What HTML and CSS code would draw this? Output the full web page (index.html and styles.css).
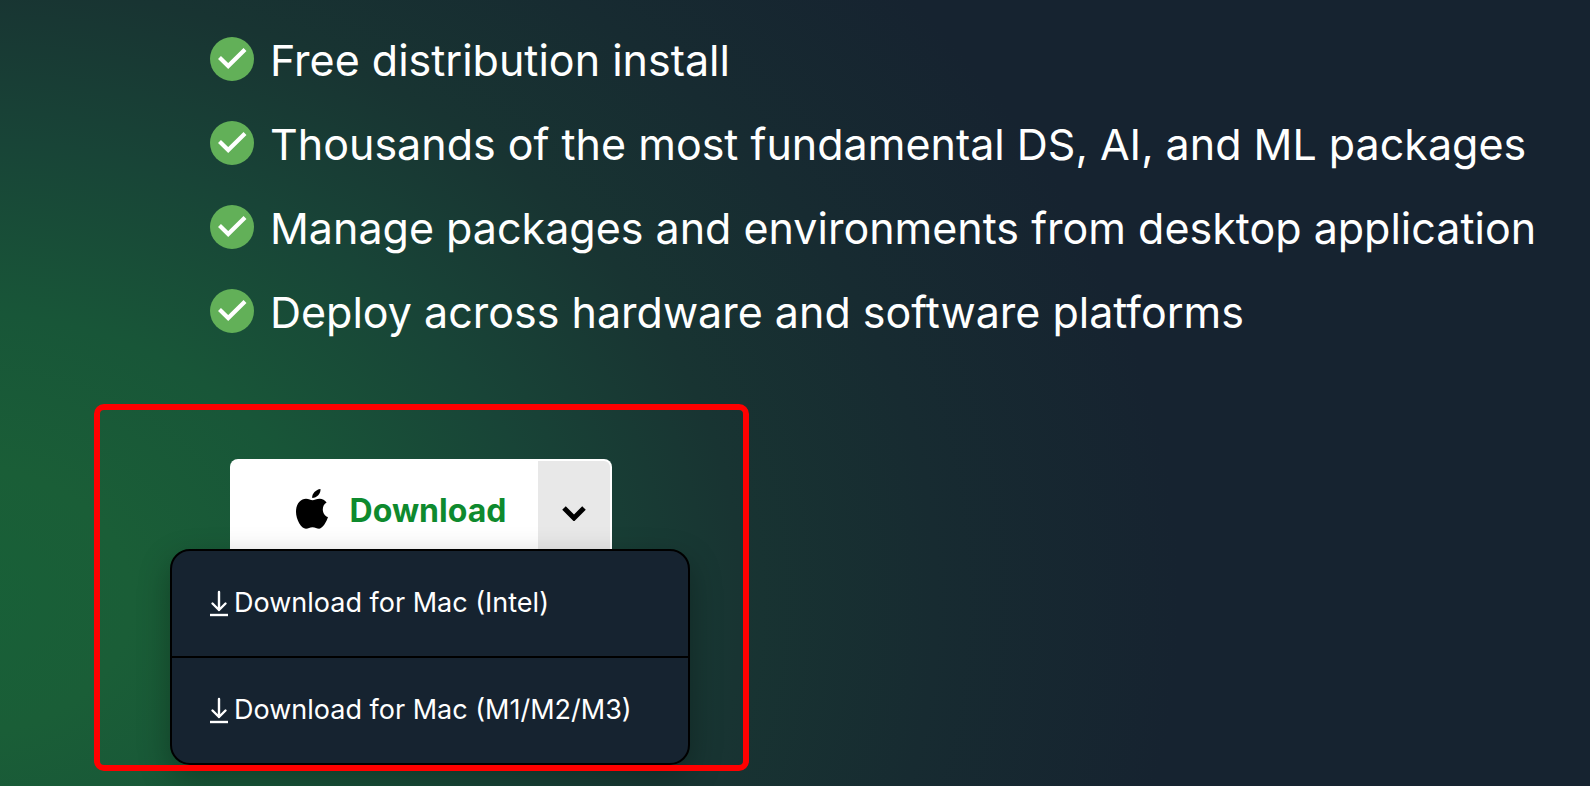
FILE: index.html
```html
<!DOCTYPE html>
<html lang="en">
<head>
<meta charset="utf-8">
<title>Download</title>
<meta name="viewport" content="width=device-width, initial-scale=1">
<link rel="stylesheet" href="styles.css">
</head>
<body>
<svg class="sprite" aria-hidden="true">
  <symbol id="check" viewBox="0 0 44 44">
    <circle cx="22" cy="22" r="22" fill="#62b058"/>
    <path d="M9.500 20.500l8.700 8.500L35 12.500" fill="none" stroke="#fff" stroke-width="4.200"/>
  </symbol>
  <symbol id="save" viewBox="0 0 18 28">
    <path d="M9 3v18M2.500 14.500L9 21l6.500-6.500" fill="none" stroke="#fff" stroke-width="2.400" stroke-linecap="round" stroke-linejoin="round"/>
    <path d="M0 26h18" stroke="#fff" stroke-width="2.400"/>
  </symbol>
</svg>
<main class="hero">
  <ul class="features">
    <li class="feature"><svg class="feature-icon" aria-hidden="true"><use href="#check"/></svg><span>Free distribution install</span></li>
    <li class="feature"><svg class="feature-icon" aria-hidden="true"><use href="#check"/></svg><span>Thousands of the most fundamental DS, AI, and ML packages</span></li>
    <li class="feature"><svg class="feature-icon" aria-hidden="true"><use href="#check"/></svg><span>Manage packages and environments from desktop application</span></li>
    <li class="feature"><svg class="feature-icon" aria-hidden="true"><use href="#check"/></svg><span>Deploy across hardware and software platforms</span></li>
  </ul>
  <section class="download">
    <div class="split-button">
      <button class="main-action" type="button">
        <svg class="apple" viewBox="0 0 32 40" aria-hidden="true">
          <path d="M24.500 0c.4 4.600-3.600 9-8.300 9C15.600 4.700 20 .5 24.500 0z"/>
          <path d="M30.600 13.600c-2.400 1.500-3.800 3.800-3.800 6.800 0 3.700 2.200 6.500 5.200 7.700-1.400 4.400-5.200 11.400-8.800 11.600-2.500 0-3.900-1.500-6.700-1.500s-4.200 1.500-6.500 1.600C5.300 39.900 0 30.700 0 22.800 0 14.500 4.800 9.700 10 9.700c2.700 0 4.800 1.600 6.600 1.600 1.600 0 4.200-1.700 7.300-1.600 2.400 0 5.100 1.300 6.700 3.900z"/>
        </svg>
        <span>Download</span>
      </button>
      <button class="toggle" type="button" aria-label="Choose platform" aria-expanded="true">
        <svg class="chevron" viewBox="0 0 24 16" aria-hidden="true"><path d="M2 3l10 10L22 3" fill="none" stroke="#000" stroke-width="5"/></svg>
      </button>
    </div>
    <nav class="menu" aria-label="Downloads">
      <a class="menu-item" href="#"><svg class="menu-icon" aria-hidden="true"><use href="#save"/></svg><span>Download for Mac (Intel)</span></a>
      <a class="menu-item" href="#"><svg class="menu-icon" aria-hidden="true"><use href="#save"/></svg><span>Download for Mac (M1/M2/M3)</span></a>
    </nav>
  </section>
</main>
</body>
</html>
```
FILE: styles.css
```css
* {
  box-sizing: border-box;
}

body {
  margin: 0;
  font-family: Inter, "Liberation Sans", sans-serif;
  color: #fff;
  background: #162330;
}

.sprite {
  position: absolute;
  width: 0;
  height: 0;
}

.hero {
  min-height: 100vh;
  padding: 29px 32px 15px 94px;
  overflow: hidden;
  background: radial-gradient(ellipse 1220px 960px at -40px 600px, #186038 0, #1a5e37 14%, #185638 30%, #184437 48%, #183432 64%, #172b31 80%, #162330 100%);
}

.features {
  display: flex;
  flex-direction: column;
  gap: 24px;
  margin: 0 0 63px;
  padding: 0 0 0 116px;
  list-style: none;
}

.feature {
  display: flex;
  align-items: center;
  gap: 16px;
  min-height: 60px;
  font-size: 43px;
  line-height: 58px;
}

.feature span {
  padding-top: 2px;
}

.feature-icon {
  flex: none;
  width: 44px;
  height: 44px;
}

.download {
  position: relative;
  width: fit-content;
  padding: 55px 59px 6px 76px;
}

.download::after {
  content: "";
  position: absolute;
  inset: 0;
  border: 6px solid #f00;
  border-radius: 10px;
  pointer-events: none;
}

.split-button {
  display: flex;
  width: 382px;
  height: 90px;
  margin-left: 60px;
  padding: 2px 2px 0 0;
  border-radius: 8px 8px 0 0;
  background: #fff;
}

.split-button button {
  border: 0;
  font: inherit;
}

.main-action {
  display: flex;
  flex: 1;
  align-items: center;
  justify-content: center;
  gap: 22px;
  padding: 8px 0 0 34px;
  background: none;
}

.split-button .main-action {
  color: #0e8a2e;
  font-size: 32px;
  font-weight: 700;
  line-height: 40px;
}

.main-action span {
  padding-top: 4px;
}

.apple {
  width: 32px;
  height: 40px;
  fill: #000;
}

.toggle {
  display: flex;
  align-items: center;
  justify-content: center;
  width: 72px;
  padding: 16px 0 0;
  border-radius: 0 6px 0 0;
  background: #e8e8e8;
}

.chevron {
  width: 24px;
  height: 16px;
}

.menu {
  position: relative;
  width: 520px;
  border: 2px solid #000;
  border-radius: 20px;
  background: #162330;
  box-shadow: 0 12px 32px rgba(0, 0, 0, 0.3);
}

.menu-item {
  display: flex;
  align-items: center;
  gap: 6px;
  height: 105px;
  padding: 0 38px 2px;
  color: #fff;
  font-size: 27px;
  text-decoration: none;
}

.menu-item + .menu-item {
  height: 107px;
  border-top: 2px solid #000;
}

.menu-icon {
  flex: none;
  width: 18px;
  height: 28px;
}
```
